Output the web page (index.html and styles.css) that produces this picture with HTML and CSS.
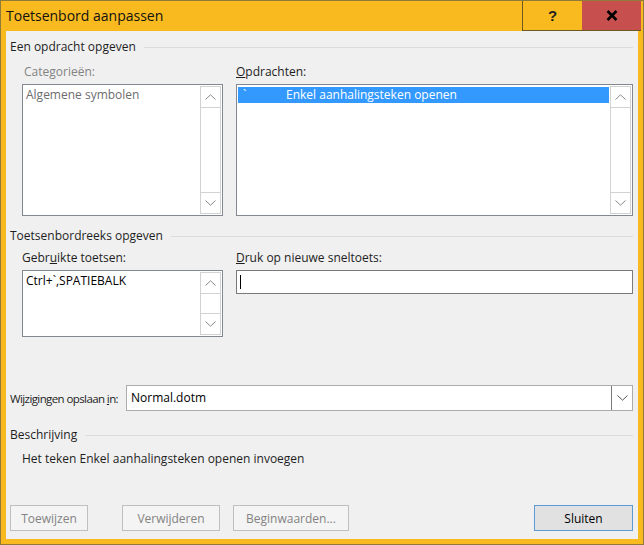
FILE: index.html
```html
<!DOCTYPE html>
<html>
<head>
	<meta charset="utf-8">
	<meta name="viewport" content="width=device-width, initial-scale=1">
	<title>Toetsenbord aanpassen</title>
	<link rel="stylesheet" href="styles.css">
</head>
<body>
	<div class="window">
		<div class="titlebar">
			<div class="title">Toetsenbord aanpassen</div>
			<div class="tbtn help">?</div>
			<div class="tbtn close">
				<svg width="12" height="11" viewBox="0 0 12 11"><path d="M1.5 1 L10.5 10 M10.5 1 L1.5 10" stroke="#000" stroke-width="2.6"/></svg>
			</div>
		</div>
		<div class="content">
			<div class="section">Een opdracht opgeven</div>
			<div class="row top-row">
				<div class="col left">
					<div class="label disabled">Categorieën:</div>
					<div class="listbox tall">
						<div class="items"><div class="item grey">Algemene symbolen</div></div>
						<div class="scrollbar">
							<div class="arrow up"><svg width="11" height="6" viewBox="0 0 11 6"><path d="M0.5 5.5 L5.5 0.8 L10.5 5.5" fill="none" stroke="#8a8a8a"/></svg></div>
							<div class="arrow down"><svg width="11" height="6" viewBox="0 0 11 6"><path d="M0.5 0.5 L5.5 5.2 L10.5 0.5" fill="none" stroke="#8a8a8a"/></svg></div>
						</div>
					</div>
				</div>
				<div class="col right">
					<div class="label"><u>O</u>pdrachten:</div>
					<div class="listbox tall">
						<div class="items"><div class="item selected"><span class="key">`</span>Enkel aanhalingsteken openen</div></div>
						<div class="scrollbar">
							<div class="arrow up"><svg width="11" height="6" viewBox="0 0 11 6"><path d="M0.5 5.5 L5.5 0.8 L10.5 5.5" fill="none" stroke="#8a8a8a"/></svg></div>
							<div class="arrow down"><svg width="11" height="6" viewBox="0 0 11 6"><path d="M0.5 0.5 L5.5 5.2 L10.5 0.5" fill="none" stroke="#8a8a8a"/></svg></div>
						</div>
					</div>
				</div>
			</div>
			<div class="section second">Toetsenbordreeks opgeven</div>
			<div class="row">
				<div class="col left">
					<div class="label">Gebr<u>u</u>ikte toetsen:</div>
					<div class="listbox short">
						<div class="items"><div class="item">Ctrl+`,SPATIEBALK</div></div>
						<div class="scrollbar">
							<div class="arrow up"><svg width="11" height="6" viewBox="0 0 11 6"><path d="M0.5 5.5 L5.5 0.8 L10.5 5.5" fill="none" stroke="#8a8a8a"/></svg></div>
							<div class="arrow down"><svg width="11" height="6" viewBox="0 0 11 6"><path d="M0.5 0.5 L5.5 5.2 L10.5 0.5" fill="none" stroke="#8a8a8a"/></svg></div>
						</div>
					</div>
				</div>
				<div class="col right">
					<div class="label"><u>D</u>ruk op nieuwe sneltoets:</div>
					<div class="textbox"><span class="caret"></span></div>
				</div>
			</div>
			<div class="save-row">
				<div class="save-label">Wijzigingen opslaan <u>i</u>n:</div>
				<div class="combo">
					<div class="combo-text">Normal.dotm</div>
					<div class="combo-btn"><svg width="11" height="6" viewBox="0 0 11 6"><path d="M0.5 0.5 L5.5 5.2 L10.5 0.5" fill="none" stroke="#555"/></svg></div>
				</div>
			</div>
			<div class="section third">Beschrijving</div>
			<div class="description">Het teken Enkel aanhalingsteken openen invoegen</div>
			<div class="buttons">
				<button class="btn btn-toewijzen" disabled>Toewijzen</button>
				<button class="btn btn-verwijderen" disabled>Verwijderen</button>
				<button class="btn btn-begin" disabled>Beginwaarden...</button>
				<button class="btn btn-sluiten">Sluiten</button>
			</div>
		</div>
	</div>
</body>
</html>
```

FILE: styles.css
```css
body {
	margin: 0;
	padding: 0;
	font-family: "Open Sans", "Noto Sans", sans-serif;
	font-size: 12px;
	color: #000;
}
.window {
	width: 644px;
	height: 545px;
	box-sizing: border-box;
	border: 1px solid #8f7a3a;
	background-color: #f8ba1f;
	display: flex;
	flex-direction: column;
}
.titlebar {
	height: 30px;
	display: flex;
	flex-shrink: 0;
}
.title {
	flex: 1;
	padding-left: 5px;
	font-size: 14px;
	line-height: 30px;
	color: #111;
}
.tbtn {
	width: 59px;
	height: 29px;
	display: flex;
	align-items: center;
	justify-content: center;
}
.help {
	border-left: 1px solid #6d5a22;
	border-bottom: 1px solid #6d5a22;
	font-size: 15px;
	font-weight: bold;
	font-family: "Liberation Sans", sans-serif;
	color: #222;
}
.close {
	background-color: #c7504f;
	border-bottom: 1px solid #6d5a22;
	margin-right: 2px;
}
.content {
	flex: 1;
	margin: 0 5px 5px 5px;
	background-color: #f0f0f0;
	padding: 8px 5px 0 4px;
	display: flex;
	flex-direction: column;
}
.section {
	display: flex;
	align-items: center;
	height: 16px;
	line-height: 16px;
	color: #1e1e1e;
	white-space: nowrap;
}
.section::after {
	content: "";
	flex: 1;
	height: 1px;
	background-color: #dcdcdc;
	margin-left: 8px;
}
.section.second {
	margin-top: 12px;
}
.section.third {
	margin-top: 16px;
}
.row {
	display: flex;
	padding-left: 12px;
	gap: 13px;
}
.col.left {
	width: 201px;
}
.col.right {
	flex: 1;
}
.label {
	height: 16px;
	line-height: 16px;
	margin: 6px 0 4px 0;
	color: #1e1e1e;
	white-space: nowrap;
}
.top-row .label {
	margin-top: 9px;
}
.label.disabled {
	color: #838383;
	padding-left: 2px;
}
.listbox {
	box-sizing: border-box;
	border: 1px solid #828790;
	background: #fff;
	display: flex;
}
.listbox.tall {
	height: 132px;
}
.listbox.short {
	height: 67px;
}
.items {
	flex: 1;
	padding: 2px 0 0 1px;
	white-space: nowrap;
}
.item {
	height: 16px;
	line-height: 16px;
	padding-left: 2px;
}
.item.grey {
	color: #6d6d6d;
}
.item.selected {
	background-color: #3399ff;
	color: #fff;
	display: flex;
}
.key {
	width: 43px;
	padding-left: 3px;
}
.scrollbar {
	width: 19px;
	margin: 1px;
	border: 1px solid #d2d2d2;
	display: flex;
	flex-direction: column;
	justify-content: space-between;
}
.arrow {
	height: 20px;
	display: flex;
	align-items: center;
	justify-content: center;
}
.arrow.up {
	border-bottom: 1px solid #d2d2d2;
}
.arrow.down {
	border-top: 1px solid #d2d2d2;
}
.textbox {
	height: 24px;
	box-sizing: border-box;
	border: 1px solid #7a7a7a;
	background: #fff;
	padding: 4px 0 0 3px;
}
.caret {
	display: block;
	width: 1px;
	height: 14px;
	background: #000;
}
.save-row {
	display: flex;
	align-items: center;
	margin-top: 48px;
}
.save-label {
	width: 116px;
	flex-shrink: 0;
	color: #1e1e1e;
	white-space: nowrap;
	font-size: 11.5px;
	letter-spacing: -0.6px;
}
.combo {
	flex: 1;
	height: 26px;
	box-sizing: border-box;
	border: 1px solid #acacac;
	background: #fff;
	display: flex;
}
.combo-text {
	flex: 1;
	line-height: 24px;
	padding-left: 4px;
}
.combo-btn {
	width: 20px;
	border-left: 1px solid #7a7a7a;
	display: flex;
	align-items: center;
	justify-content: center;
}
.description {
	margin-top: 8px;
	padding-left: 12px;
	height: 16px;
	line-height: 16px;
	color: #1e1e1e;
}
.buttons {
	display: flex;
	margin-top: 38px;
}
.btn {
	height: 26px;
	box-sizing: border-box;
	font-family: inherit;
	font-size: 12px;
	padding: 0;
	background-color: #f4f4f4;
	border: 1px solid #bfbfbf;
	color: #838383;
}
.btn-toewijzen {
	width: 78px;
}
.btn-verwijderen {
	width: 98px;
	margin-left: 34px;
}
.btn-begin {
	width: 116px;
	margin-left: 13px;
}
.btn-sluiten {
	width: 99px;
	margin-left: auto;
	background-color: #e1e1e1;
	border: 1px solid #5b9bd5;
	color: #000;
}
```
